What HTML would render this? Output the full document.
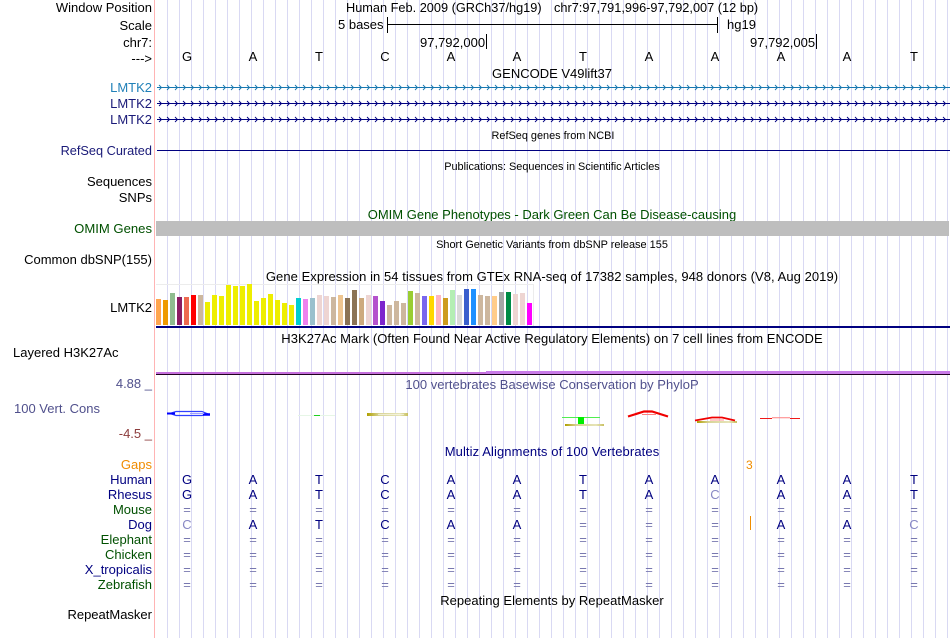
<!DOCTYPE html>
<html><head><meta charset="utf-8"><style>
html,body{margin:0;padding:0;background:#fff}
#p{position:relative;width:950px;height:638px;overflow:hidden;font-family:"Liberation Sans",sans-serif;font-size:13px;line-height:15px;color:#000;background:#fff}
#g{position:absolute;left:156px;top:0;width:794px;height:638px;background-image:linear-gradient(90deg,transparent 11px,#d9d9f3 11px);background-size:12px 100%}
#r{position:absolute;left:154px;top:0;width:1px;height:638px;background:#ffb4b4}
.l{position:absolute;right:798px;white-space:nowrap;text-align:right}
.t{position:absolute;white-space:nowrap}
.c{position:absolute;left:155px;width:794px;text-align:center;white-space:nowrap}
.s{font-size:11px}
.row{position:absolute;left:154px;white-space:nowrap;color:#000080}
.row span{display:inline-block;width:66px;text-align:center}
.row .e{color:#7878b0}
.row .f{color:#8888c4}
.b{position:absolute;width:5px;bottom:313px}
.k{position:absolute;background:#000}
svg{position:absolute;left:0;top:0}
</style></head><body><div id="p">
<div id="g"></div><div id="r"></div>

<div class="l" style="top:0">Window Position</div>
<div class="l" style="top:18px">Scale</div>
<div class="l" style="top:35px">chr7:</div>
<div class="l" style="top:51px">---&gt;</div>
<div class="t" style="left:346px;top:0;font-size:12.75px">Human Feb. 2009 (GRCh37/hg19)</div>
<div class="t" style="left:554px;top:0;font-size:12.75px">chr7:97,791,996-97,792,007 (12 bp)</div>
<div class="t" style="left:338px;top:17px">5 bases</div>
<div class="t" style="left:727px;top:17px">hg19</div>
<div class="t" style="left:420px;top:35px">97,792,000</div>
<div class="t" style="left:750px;top:35px">97,792,005</div>
<div class="k" style="left:387px;top:24px;width:331px;height:1px"></div>
<div class="k" style="left:387px;top:17px;width:1px;height:16px"></div>
<div class="k" style="left:717px;top:17px;width:1px;height:16px"></div>
<div class="k" style="left:486px;top:34px;width:1px;height:15px"></div>
<div class="k" style="left:816px;top:34px;width:1px;height:15px"></div>

<div class="row" style="top:49px;color:#000"><span>G</span><span>A</span><span>T</span><span>C</span><span>A</span><span>A</span><span>T</span><span>A</span><span>A</span><span>A</span><span>A</span><span style="margin-left:1px">T</span></div>

<div class="c" style="top:66px">GENCODE V49lift37</div>
<div class="l" style="top:80px;color:#2080b8">LMTK2</div>
<div class="l" style="top:96px;color:#1a1a78">LMTK2</div>
<div class="l" style="top:112px;color:#1a1a78">LMTK2</div>
<svg width="950" height="638">
<defs>
<pattern id="a1" x="158" y="80" width="8" height="16" patternUnits="userSpaceOnUse"><path d="M1 5L3.5 7.5L1 10" fill="none" stroke="#1878b0" stroke-width="0.9"/></pattern>
<pattern id="a2" x="158" y="96" width="8" height="16" patternUnits="userSpaceOnUse"><path d="M1 5L3.5 7.5L1 10" fill="none" stroke="#000080" stroke-width="0.9"/></pattern>
<pattern id="a3" x="158" y="112" width="8" height="16" patternUnits="userSpaceOnUse"><path d="M1 5L3.5 7.5L1 10" fill="none" stroke="#000080" stroke-width="0.9"/></pattern>
<linearGradient id="y1" x1="0" x2="1" y1="0" y2="0"><stop offset="0" stop-color="#b0a000"/><stop offset=".3" stop-color="#d8d498"/><stop offset=".8" stop-color="#e6e4b8"/><stop offset="1" stop-color="#c8c060"/></linearGradient>
</defs>
<rect x="157" y="87" width="793" height="1" fill="#1878b0"/>
<rect x="158" y="80" width="792" height="16" fill="url(#a1)"/>
<rect x="157" y="103" width="793" height="1" fill="#000080"/>
<rect x="158" y="96" width="792" height="16" fill="url(#a2)"/>
<rect x="157" y="119" width="793" height="1" fill="#000080"/>
<rect x="158" y="112" width="792" height="16" fill="url(#a3)"/>
<rect x="157" y="150" width="793" height="1" fill="#000080"/>
</svg>

<div class="c s" style="top:129px;left:156px;font-size:10.9px">RefSeq genes from NCBI</div>
<div class="l" style="top:143px;color:#1a1a78;font-size:12.75px">RefSeq Curated</div>
<div class="c s" style="top:160px;font-size:10.9px">Publications: Sequences in Scientific Articles</div>
<div class="l" style="top:174px">Sequences</div>
<div class="l" style="top:190px">SNPs</div>
<div class="c" style="top:207px;color:#005000">OMIM Gene Phenotypes - Dark Green Can Be Disease-causing</div>
<div class="l" style="top:221px;color:#005000;font-size:13.1px">OMIM Genes</div>
<div style="position:absolute;left:156px;top:221px;width:793px;height:15px;background:#bebebe"></div>
<div class="c s" style="top:238px;font-size:10.95px">Short Genetic Variants from dbSNP release 155</div>
<div class="l" style="top:252px">Common dbSNP(155)</div>
<div class="c" style="top:269px;letter-spacing:.055px">Gene Expression in 54 tissues from GTEx RNA-seq of 17382 samples, 948 donors (V8, Aug 2019)</div>
<div class="l" style="top:300px">LMTK2</div>

<div style="position:absolute;left:156px;top:284px;width:377px;height:41px;border:1px solid #ececec;border-left:0;box-sizing:content-box"></div>
<div class="b" style="left:156px;height:26px;background:#FFA54F"></div>
<div class="b" style="left:163px;height:25px;background:#EE9A00"></div>
<div class="b" style="left:170px;height:32px;background:#8FBC8F"></div>
<div class="b" style="left:177px;height:28px;background:#8B1C62"></div>
<div class="b" style="left:184px;height:28px;background:#EE6A50"></div>
<div class="b" style="left:191px;height:30px;background:#FF0000"></div>
<div class="b" style="left:198px;height:30px;background:#CDB79E"></div>
<div class="b" style="left:205px;height:23px;background:#EEEE00"></div>
<div class="b" style="left:212px;height:30px;background:#EEEE00"></div>
<div class="b" style="left:219px;height:29px;background:#EEEE00"></div>
<div class="b" style="left:226px;height:40px;background:#EEEE00"></div>
<div class="b" style="left:233px;height:39px;background:#EEEE00"></div>
<div class="b" style="left:240px;height:39px;background:#EEEE00"></div>
<div class="b" style="left:247px;height:41px;background:#EEEE00"></div>
<div class="b" style="left:254px;height:24px;background:#EEEE00"></div>
<div class="b" style="left:261px;height:27px;background:#EEEE00"></div>
<div class="b" style="left:268px;height:31px;background:#EEEE00"></div>
<div class="b" style="left:275px;height:25px;background:#EEEE00"></div>
<div class="b" style="left:282px;height:22px;background:#EEEE00"></div>
<div class="b" style="left:289px;height:20px;background:#EEEE00"></div>
<div class="b" style="left:296px;height:27px;background:#00CED1"></div>
<div class="b" style="left:303px;height:26px;background:#EE82EE"></div>
<div class="b" style="left:310px;height:27px;background:#9AC0CD"></div>
<div class="b" style="left:317px;height:30px;background:#EED5D2"></div>
<div class="b" style="left:324px;height:29px;background:#EED5D2"></div>
<div class="b" style="left:331px;height:28px;background:#CDB79E"></div>
<div class="b" style="left:338px;height:30px;background:#EEC591"></div>
<div class="b" style="left:345px;height:27px;background:#8B7355"></div>
<div class="b" style="left:352px;height:35px;background:#8B7355"></div>
<div class="b" style="left:359px;height:27px;background:#CDAA7D"></div>
<div class="b" style="left:366px;height:30px;background:#EED5D2"></div>
<div class="b" style="left:373px;height:29px;background:#B452CD"></div>
<div class="b" style="left:380px;height:24px;background:#7D26CD"></div>
<div class="b" style="left:387px;height:20px;background:#CDB79E"></div>
<div class="b" style="left:394px;height:24px;background:#CDB79E"></div>
<div class="b" style="left:401px;height:22px;background:#CDB79E"></div>
<div class="b" style="left:408px;height:34px;background:#9ACD32"></div>
<div class="b" style="left:415px;height:32px;background:#CDB79E"></div>
<div class="b" style="left:422px;height:29px;background:#7A67EE"></div>
<div class="b" style="left:429px;height:29px;background:#FFD700"></div>
<div class="b" style="left:436px;height:30px;background:#FFB6C1"></div>
<div class="b" style="left:443px;height:27px;background:#CD9B1D"></div>
<div class="b" style="left:450px;height:35px;background:#B4EEB4"></div>
<div class="b" style="left:457px;height:30px;background:#D9D9D9"></div>
<div class="b" style="left:464px;height:36px;background:#3A5FCD"></div>
<div class="b" style="left:471px;height:36px;background:#1E90FF"></div>
<div class="b" style="left:478px;height:30px;background:#CDB79E"></div>
<div class="b" style="left:485px;height:29px;background:#CDB79E"></div>
<div class="b" style="left:492px;height:29px;background:#FFCC8A"></div>
<div class="b" style="left:499px;height:33px;background:#A6A6A6"></div>
<div class="b" style="left:506px;height:33px;background:#008B45"></div>
<div class="b" style="left:513px;height:31px;background:#EED5D2"></div>
<div class="b" style="left:520px;height:32px;background:#EED5D2"></div>
<div class="b" style="left:527px;height:22px;background:#FF00FF"></div>
<div style="position:absolute;left:156px;top:326px;width:794px;height:2px;background:#000080"></div>

<div class="c" style="top:331px;letter-spacing:.045px">H3K27Ac Mark (Often Found Near Active Regulatory Elements) on 7 cell lines from ENCODE</div>
<div class="t" style="left:13px;top:345px">Layered H3K27Ac</div>
<div style="position:absolute;left:156px;top:372px;width:330px;height:2px;background:#c46fdc"></div>
<div style="position:absolute;left:486px;top:371px;width:464px;height:3px;background:#c87ae8"></div>
<div style="position:absolute;left:156px;top:374px;width:794px;height:1px;background:#200020"></div>

<div class="l" style="top:376px;color:#50508c">4.88 _</div>
<div class="c" style="top:377px;color:#50508c;letter-spacing:.03px">100 vertebrates Basewise Conservation by PhyloP</div>
<div class="t" style="left:14px;top:401px;color:#50508c">100 Vert. Cons</div>
<div class="l" style="top:426px;color:#8c3c3c">-4.5 _</div>

<svg width="950" height="638">
<g fill="none">
<path d="M170 413.5L176 411.5H202L208 414L202 415.5H176Z" stroke="#3040ff" stroke-width="1.2"/>
<path d="M167 413.5H175" stroke="#0000ff" stroke-width="2"/>
<path d="M203 414.5H210" stroke="#0000ff" stroke-width="2.5"/>
<path d="M190 413.5H204" stroke="#a0a0ff" stroke-width="1"/>
<path d="M298 415.5H335" stroke="#e6f6e6" stroke-width="1"/>
<path d="M314 415.5H320" stroke="#20d020" stroke-width="1"/>
<rect x="367" y="413" width="41" height="3" fill="url(#y1)"/>
<path d="M378 414.5H404" stroke="#fff" stroke-width=".8" opacity=".7"/>
<path d="M562 417.5H600" stroke="#50ee50" stroke-width="1"/>
<rect x="578" y="417" width="6" height="7" fill="#00ee00"/>
<rect x="565" y="424" width="39" height="2" fill="url(#y1)"/>
<path d="M628 416.5L644 411.5H652L668 416.5" stroke="#f00000" stroke-width="2.2"/>
<path d="M642 414.5H656" stroke="#ff8080" stroke-width="1"/>
<rect x="697" y="421" width="40" height="2" fill="url(#y1)"/>
<path d="M695 420.5L712 417.5H722L735 420.5" stroke="#f00000" stroke-width="1.7"/>
<path d="M710 420H724" stroke="#ff9090" stroke-width="1"/>
<path d="M760 418.5H772M790 418.5H800" stroke="#f01818" stroke-width="1"/>
<path d="M772 417.8H790" stroke="#ff8080" stroke-width="1"/>
</g>
</svg>

<div class="c" style="top:444px;color:#000080;letter-spacing:.1px">Multiz Alignments of 100 Vertebrates</div>
<div class="l" style="top:457px;color:#f08c00">Gaps</div>
<div class="t" style="left:746px;top:458px;font-size:12px;color:#f08c00">3</div>
<div class="l" style="top:472px;color:#000080">Human</div>
<div class="l" style="top:487px;color:#000080">Rhesus</div>
<div class="l" style="top:502px;color:#005000">Mouse</div>
<div class="l" style="top:517px;color:#000080">Dog</div>
<div class="l" style="top:532px;color:#005000">Elephant</div>
<div class="l" style="top:547px;color:#005000">Chicken</div>
<div class="l" style="top:562px;color:#000080">X_tropicalis</div>
<div class="l" style="top:577px;color:#005000">Zebrafish</div>

<div class="row" style="top:472px"><span>G</span><span>A</span><span>T</span><span>C</span><span>A</span><span>A</span><span>T</span><span>A</span><span>A</span><span>A</span><span>A</span><span style="margin-left:1px">T</span></div>
<div class="row" style="top:487px"><span>G</span><span>A</span><span>T</span><span>C</span><span>A</span><span>A</span><span>T</span><span>A</span><span class="f">C</span><span>A</span><span>A</span><span style="margin-left:1px">T</span></div>
<div class="row" style="top:502px"><span class="e">=</span><span class="e">=</span><span class="e">=</span><span class="e">=</span><span class="e">=</span><span class="e">=</span><span class="e">=</span><span class="e">=</span><span class="e">=</span><span class="e">=</span><span class="e">=</span><span class="e" style="margin-left:1px">=</span></div>
<div class="row" style="top:517px"><span class="f">C</span><span>A</span><span>T</span><span>C</span><span>A</span><span>A</span><span class="e">=</span><span class="e">=</span><span class="e">=</span><span>A</span><span>A</span><span class="f" style="margin-left:1px">C</span></div>
<div class="row" style="top:532px"><span class="e">=</span><span class="e">=</span><span class="e">=</span><span class="e">=</span><span class="e">=</span><span class="e">=</span><span class="e">=</span><span class="e">=</span><span class="e">=</span><span class="e">=</span><span class="e">=</span><span class="e" style="margin-left:1px">=</span></div>
<div class="row" style="top:547px"><span class="e">=</span><span class="e">=</span><span class="e">=</span><span class="e">=</span><span class="e">=</span><span class="e">=</span><span class="e">=</span><span class="e">=</span><span class="e">=</span><span class="e">=</span><span class="e">=</span><span class="e" style="margin-left:1px">=</span></div>
<div class="row" style="top:562px"><span class="e">=</span><span class="e">=</span><span class="e">=</span><span class="e">=</span><span class="e">=</span><span class="e">=</span><span class="e">=</span><span class="e">=</span><span class="e">=</span><span class="e">=</span><span class="e">=</span><span class="e" style="margin-left:1px">=</span></div>
<div class="row" style="top:577px"><span class="e">=</span><span class="e">=</span><span class="e">=</span><span class="e">=</span><span class="e">=</span><span class="e">=</span><span class="e">=</span><span class="e">=</span><span class="e">=</span><span class="e">=</span><span class="e">=</span><span class="e" style="margin-left:1px">=</span></div>
<div style="position:absolute;left:750px;top:516px;width:1px;height:14px;background:#f08c00"></div>

<div class="c" style="top:593px;letter-spacing:.03px">Repeating Elements by RepeatMasker</div>
<div class="l" style="top:607px">RepeatMasker</div>
</div></body></html>
